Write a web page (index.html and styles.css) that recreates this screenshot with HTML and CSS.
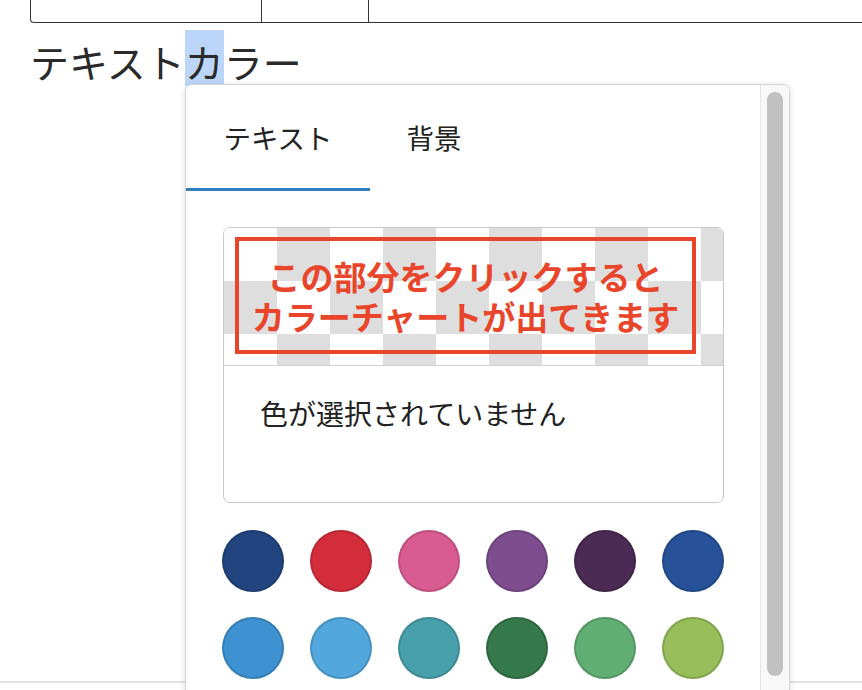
FILE: index.html
```html
<!DOCTYPE html>
<html lang="ja">
<head>
<meta charset="utf-8">
<link rel="stylesheet" href="styles.css">
</head>
<body>
<div class="page">
  <div class="table-edge">
    <div class="cell c1"></div>
    <div class="cell c2"></div>
    <div class="cell c3"></div>
  </div>
  <div class="heading">テキスト<span class="sel">カ</span>ラー</div>
  <div class="editor-rest"></div>

  <div class="popup">
    <div class="popup-main">
      <div class="tabs">
        <div class="tab active">テキスト</div>
        <div class="tab t2">背景</div>
      </div>
      <div class="panel">
        <div class="color-box">
          <div class="checker">
            <div class="note"><span class="note-line">この部分をクリックすると</span><span class="note-line">カラーチャートが出てきます</span></div>
          </div>
          <div class="status">色が選択されていません</div>
        </div>
        <div class="swatches">
          <span class="sw" style="background:#22457f"></span>
          <span class="sw" style="background:#d32d3c"></span>
          <span class="sw" style="background:#d95c91"></span>
          <span class="sw" style="background:#7e4d8f"></span>
          <span class="sw" style="background:#4b2a54"></span>
          <span class="sw" style="background:#27529a"></span>
          <span class="sw" style="background:#3e92d2"></span>
          <span class="sw" style="background:#52a7dc"></span>
          <span class="sw" style="background:#48a0ab"></span>
          <span class="sw" style="background:#35784a"></span>
          <span class="sw" style="background:#61ae74"></span>
          <span class="sw" style="background:#97be5a"></span>
        </div>
      </div>
    </div>
    <div class="scroll-track"><div class="scroll-thumb"></div></div>
  </div>
</div>
</body>
</html>
```

FILE: styles.css
```css
* { box-sizing: border-box; }
html, body { margin: 0; padding: 0; background: #fff; overflow: hidden; }
body {
  font-family: "Noto Sans CJK JP", "Noto Sans", sans-serif;
  color: #222;
  width: 862px;
  height: 690px;
}
.page { position: relative; width: 862px; height: 690px; overflow: hidden; }

.table-edge {
  margin-left: 30px;
  height: 23px;
  display: flex;
  border-left: 1.5px solid #333;
  border-bottom: 1.5px solid #333;
  border-bottom-left-radius: 4px;
}
.cell { height: 100%; border-right: 1.5px solid #333; }
.c1 { width: 231px; }
.c2 { width: 107px; }
.c3 { flex: 1; border-right: none; }

.heading {
  margin-top: 10px;
  margin-left: 30px;
  height: 53px;
  font-size: 39px;
  line-height: 56px;
  color: #2a2a2a;
  white-space: nowrap;
}
.sel {
  background: #bcd6fa;
  display: inline-block;
  height: 53px;
  line-height: 56px;
  box-shadow: 0 -3px 0 #bcd6fa;
}

.editor-rest {
  height: 597px;
  border-bottom: 2px solid #e2e2e2;
}

.popup {
  position: absolute;
  left: 185px;
  top: 84px;
  width: 605px;
  height: 640px;
  background: #fff;
  border: 1px solid #d6d6d6;
  border-radius: 7px;
  box-shadow: 0 1px 6px rgba(0,0,0,0.14);
  display: flex;
  overflow: hidden;
}
.popup-main { flex: 1; }

.tabs { display: flex; height: 106px; }
.tab {
  height: 106px;
  display: flex;
  align-items: center;
  justify-content: center;
  font-size: 27.5px;
  color: #222;
  border-bottom: 3px solid transparent;
}
.tab.active { width: 184px; border-bottom-color: #2f7fc1; }
.tab.t2 { width: 128px; }

.panel { padding: 36px 0 0 37px; width: 538px; }

.color-box {
  width: 501px;
  height: 276px;
  border: 1.5px solid #c9c9c9;
  border-radius: 7px;
  overflow: hidden;
}
.checker {
  height: 138px;
  border-bottom: 1.5px solid #d0d0d0;
  background-color: #fff;
  background-image: conic-gradient(#dedede 0 25%, #fff 0 50%, #dedede 0 75%, #fff 0);
  background-size: 106px 106px;
  background-position: 0 0;
  position: relative;
}
.note {
  position: absolute;
  left: 11px;
  top: 9px;
  width: 461px;
  height: 117px;
  border: 4px solid #e9452a;
  color: #e9452a;
  font-weight: 700;
  font-size: 33px;
  text-align: center;
  display: flex;
  flex-direction: column;
  align-items: center;
  justify-content: center;
  gap: 4px;
}
.note-line { display: block; line-height: 36px; white-space: nowrap; }
.status {
  padding: 30px 0 0 36px;
  font-size: 28px;
  line-height: 34px;
  color: #222;
}

.swatches {
  margin-top: 27px;
  margin-left: -1px;
  display: grid;
  grid-template-columns: repeat(6, 62px);
  column-gap: 26px;
  row-gap: 25px;
}
.sw {
  display: block;
  width: 62px;
  height: 62px;
  border-radius: 50%;
  box-shadow: inset 0 0 0 2px rgba(0,0,0,0.13);
}

.scroll-track {
  width: 29px;
  background: #f8f8f8;
  border-left: 1px solid #e6e6e6;
  padding: 7px 0 0 6px;
}
.scroll-thumb {
  width: 16px;
  height: 584px;
  border-radius: 8px;
  background: #c1c1c1;
}
```
